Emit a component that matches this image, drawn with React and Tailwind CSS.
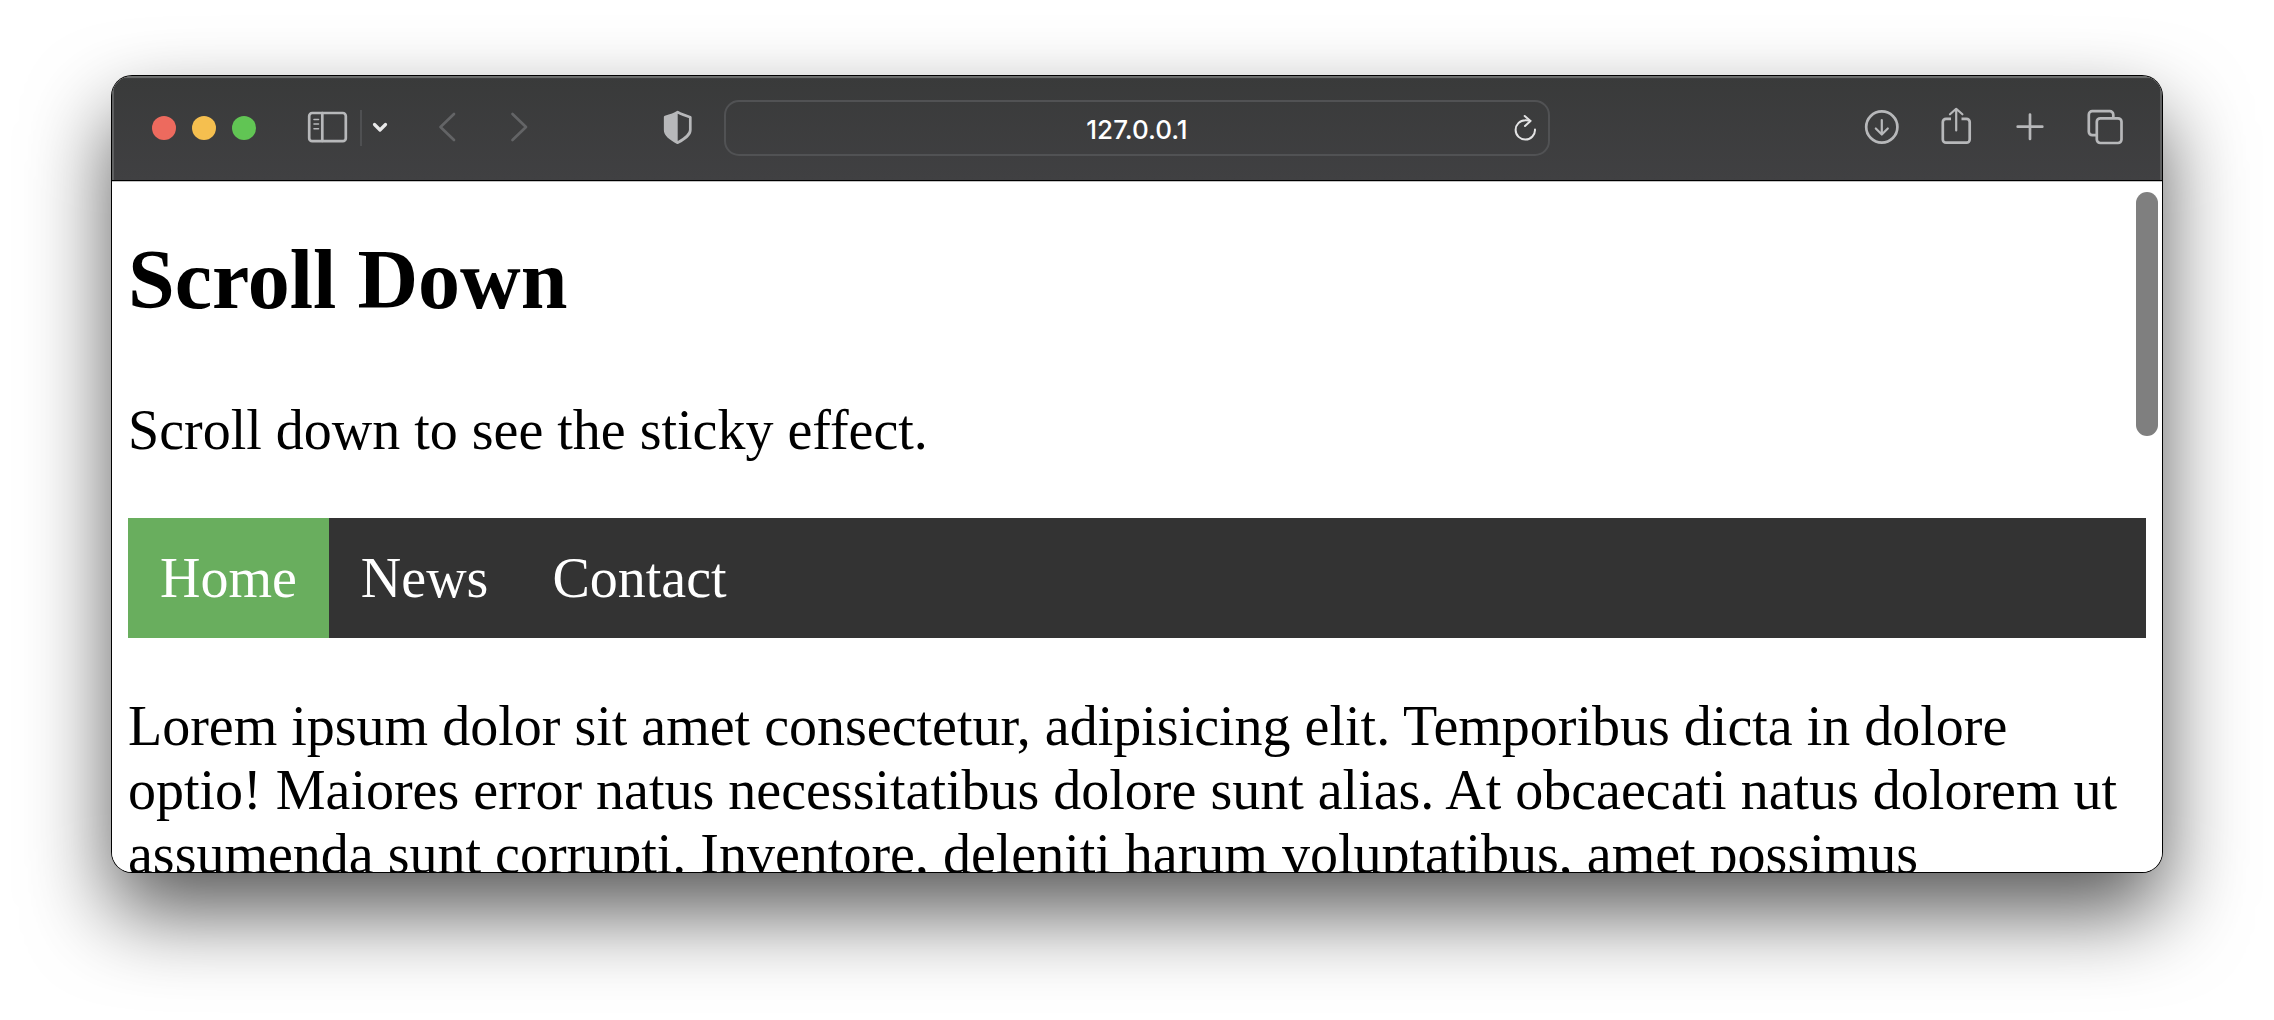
function Icon({ children, className = "size-11 text-[#b7b8ba]" }) {
  return (
    <svg
      viewBox="0 0 44 44"
      className={className}
      fill="none"
      stroke="currentColor"
      strokeWidth="2.7"
      strokeLinecap="round"
      strokeLinejoin="round"
      aria-hidden="true"
    >
      {children}
    </svg>
  );
}

function TrafficLights() {
  return (
    <div className="flex gap-4">
      <button aria-label="Close" className="size-6 rounded-full bg-[#ed6a5e]" />
      <button aria-label="Minimize" className="size-6 rounded-full bg-[#f5bf4f]" />
      <button aria-label="Zoom" className="size-6 rounded-full bg-[#61c554]" />
    </div>
  );
}

function Toolbar() {
  return (
    <header className="grid h-[105px] shrink-0 grid-cols-[1fr_826px_1fr] items-center border-b border-black bg-linear-to-b from-[#393a3a] to-[#404042] shadow-[inset_0_2px_1px_#6f7170,inset_2px_0_0_#5f6061,inset_-2px_0_0_#5f6061]">
      <div className="flex items-center pl-10">
        <TrafficLights />
        <button aria-label="Show sidebar" className="ml-[50px]">
          <Icon>
            <rect x="3.2" y="7" width="36.6" height="28.2" rx="3" />
            <path d="M16.3 7v28" />
            <path d="M8 13.5h4.5M8 18h4.5M8 22.7h4.5" strokeWidth="1.6" />
          </Icon>
        </button>
        <div className="ml-2.5 h-9 w-0.5 bg-[#4f5052]" />
        <button aria-label="Tab groups" className="ml-1.5">
          <svg viewBox="0 0 24 24" className="size-6 text-[#e9e9ea]" fill="none" stroke="currentColor" strokeWidth="3.2" strokeLinecap="round" strokeLinejoin="round" aria-hidden="true">
            <path d="M6.500 8.500l5.500 5.500L17.500 8.500" />
          </svg>
        </button>
        <button aria-label="Back" className="ml-[33px]">
          <Icon className="size-11 text-[#636466]">
            <path d="M29 8L15.500 21L29 34" />
          </Icon>
        </button>
        <button aria-label="Forward" className="ml-7">
          <Icon className="size-11 text-[#636466]">
            <path d="M15.500 8L29 21L15.500 34" />
          </Icon>
        </button>
        <button aria-label="Privacy report" className="mr-6 ml-auto">
          <Icon>
            <path d="M21.700 6.200C19 8 14 9.800 9.200 11V24c0 5 5 8.500 12.500 12.700C29 32.500 34.300 29 34.300 24V11.200C29.500 9.800 24.500 8 21.700 6.200z" />
            <path d="M21.700 6.200C19 8 14 9.800 9.200 11V24c0 5 5 8.500 12.500 12.700z" fill="currentColor" stroke="none" />
          </Icon>
        </button>
      </div>
      <div className="flex h-14 items-center rounded-[15px] border-2 border-[#515254] pr-1.5 pl-[38px]">
        <input
          type="text"
          aria-label="Address"
          defaultValue="127.0.0.1"
          className="h-full min-w-0 flex-1 bg-transparent pt-0.5 text-center font-[Inter,sans-serif] text-[26px] font-medium text-white outline-none"
        />
        <button aria-label="Reload">
          <svg viewBox="0 0 32 32" className="size-8 text-[#e3e3e4]" fill="none" stroke="currentColor" strokeWidth="2" strokeLinecap="round" strokeLinejoin="round" aria-hidden="true">
            <path d="M25 17.500A9.700 9.700 0 1 1 15.300 8.200Q18 8 20.300 8.900" />
            <path d="M14.700 4L20.500 8.900L15 14" />
          </svg>
        </button>
      </div>
      <div className="flex items-center justify-end gap-[30px] pr-9">
        <button aria-label="Downloads">
          <Icon>
            <circle cx="21.800" cy="21" r="15.600" />
            <path d="M21.800 14v14M15.800 22.500l6 6l6-6" strokeWidth="2.200" />
          </Icon>
        </button>
        <button aria-label="Share">
          <Icon>
            <path d="M17 12.800h-5a3.200 3.200 0 0 0-3.200 3.200v17.500a3.200 3.200 0 0 0 3.200 3.200h20.500a3.200 3.200 0 0 0 3.200-3.200V16a3.200 3.200 0 0 0-3.200-3.200h-5" strokeLinecap="butt" />
            <path d="M22.200 24.500V3M16 8.300L22.200 2.800L28.400 8.300" strokeWidth="2.200" />
          </Icon>
        </button>
        <button aria-label="New tab">
          <Icon>
            <path d="M22 8.500v24.500M9.700 20.700h24.600" />
          </Icon>
        </button>
        <button aria-label="Show tab overview">
          <Icon>
            <rect x="14.800" y="12.300" width="24.700" height="24.700" rx="3.500" />
            <path d="M14.800 29.200h-4.500a3.500 3.500 0 0 1-3.500-3.500v-17a3.500 3.500 0 0 1 3.500-3.500h17.500a3.500 3.500 0 0 1 3.500 3.500v3.600" strokeLinecap="butt" />
          </Icon>
        </button>
      </div>
    </header>
  );
}

function NavLink({ active, children }) {
  return (
    <li>
      <a href="#" className={active ? "block bg-[#69ae5e] px-8 py-7" : "block px-8 py-7"}>
        {children}
      </a>
    </li>
  );
}

function Page() {
  return (
    <main className="relative min-h-0 flex-1 overflow-hidden border-t border-[#c4c4c4] bg-white px-4 font-['Liberation_Serif',serif] text-[56px] leading-[64px] text-black">
      <h2 className="mt-[50px] mb-[70px] text-[84px] leading-[96px] font-bold">Scroll Down</h2>
      <p className="mb-14">Scroll down to see the sticky effect.</p>
      <nav className="mb-14 bg-[#333333] text-white">
        <ul className="flex">
          <NavLink active>Home</NavLink>
          <NavLink>News</NavLink>
          <NavLink>Contact</NavLink>
        </ul>
      </nav>
      <p>
        Lorem ipsum dolor sit amet consectetur, adipisicing elit. Temporibus dicta in dolore optio! Maiores error natus
        necessitatibus dolore sunt alias. At obcaecati natus dolorem ut assumenda sunt corrupti. Inventore, deleniti
        harum voluptatibus, amet possimus
      </p>
      <div className="absolute top-2.5 right-1 h-[244px] w-[22px] rounded-full bg-[#7f7f7f]" />
    </main>
  );
}

export default function App() {
  return (
    <div className="flex h-screen bg-white px-28 pt-[76px] pb-[148px]">
      <div className="flex min-w-0 flex-1 rounded-[20px] shadow-[0_0_0_1px_#000,0_40px_84px_rgba(0,0,0,0.66)]">
        <div className="flex min-w-0 flex-1 flex-col overflow-hidden rounded-[20px]">
          <Toolbar />
          <Page />
        </div>
      </div>
    </div>
  );
}
